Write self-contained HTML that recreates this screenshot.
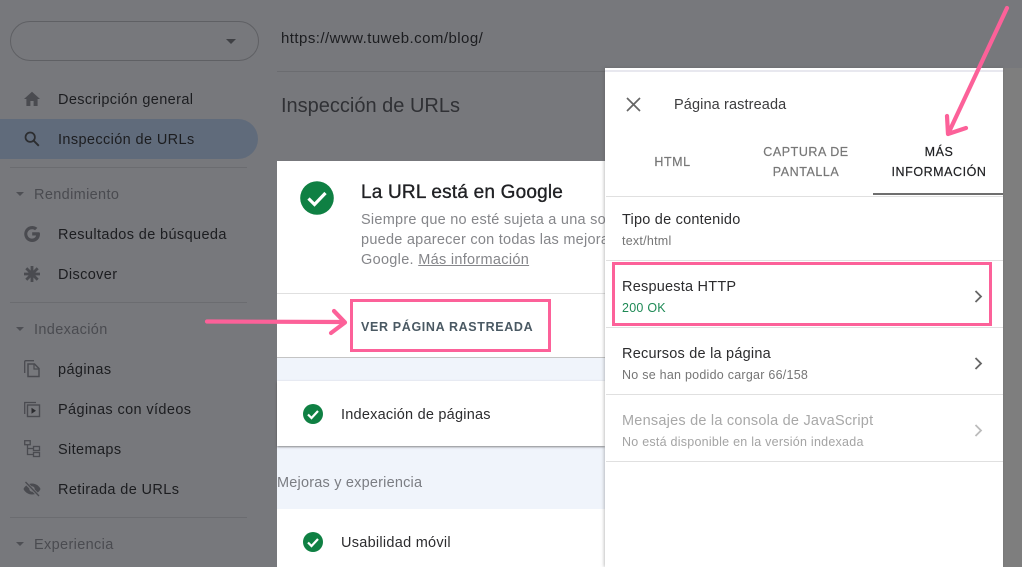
<!DOCTYPE html>
<html lang="es">
<head>
<meta charset="utf-8">
<style>
html,body{margin:0;padding:0;width:1022px;height:567px;overflow:hidden;background:#77787c;}
body{position:relative;font-family:"Liberation Sans",Arial,sans-serif;}
.t{position:absolute;white-space:nowrap;line-height:20px;}
.b{position:absolute;}
.nav{left:58px;font-size:14.5px;color:#1c1d20;letter-spacing:.38px;}
.sec{left:34px;font-size:14.5px;color:#4a4b50;letter-spacing:.35px;}
.tri{position:absolute;left:16px;width:0;height:0;border-left:4px solid transparent;border-right:4px solid transparent;border-top:4px solid #4e4f54;}
.sep{position:absolute;left:10px;width:237px;height:1px;background:#6b6c70;}
svg{position:absolute;overflow:visible;}
.tab{position:absolute;text-align:center;font-size:12.5px;line-height:20px;letter-spacing:.55px;color:#777;-webkit-text-stroke:.2px currentColor;}
.line{position:absolute;left:606px;width:397px;height:1px;background:#e0e0e0;}
.h{left:622px;font-size:14.5px;color:#2c2c2e;letter-spacing:.22px;}
.s{left:622px;font-size:12.5px;color:#757575;letter-spacing:.25px;}
</style>
</head>
<body>
<!-- sidebar -->
<div class="b" style="left:10px;top:21px;width:247px;height:38px;border:1px solid #5f6064;border-radius:20px;"></div>
<div class="b" style="left:226px;top:39px;width:0;height:0;border-left:5px solid transparent;border-right:5px solid transparent;border-top:5px solid #3f4044;"></div>
<div class="b" style="left:0;top:119px;width:258px;height:40px;background:#606b7b;border-radius:0 20px 20px 0;"></div>
<div class="sep" style="top:167px;"></div>
<div class="sep" style="top:302px;"></div>
<div class="sep" style="top:517px;"></div>

<svg style="left:24px;top:91px" width="16" height="16" viewBox="0 0 16 16"><path d="M6.4 15V10h3.2v5h4V8h2.4L8 .8 0 8h2.4v7z" fill="#4a4b50"/></svg>
<svg style="left:24px;top:131px" width="16" height="16" viewBox="0 0 16 16"><circle cx="6.2" cy="6.2" r="4.7" fill="none" stroke="#2c2d30" stroke-width="1.7"/><path d="M9.8 9.8l5 5" stroke="#2c2d30" stroke-width="1.9"/></svg>
<svg style="left:23px;top:225px" width="18" height="18" viewBox="0 0 18 18"><path d="M16.2 7.3H9.2v3.2h3.9c-.5 2-2.100 3.100-4.100 3.100a4.700 4.700 0 1 1 3-8.300l2.400-2.400A8 8 0 1 0 9 17c4.300 0 8-3 8-8 0-.6-.1-1.200-.8-1.700z" fill="#4a4b50"/></svg>
<svg style="left:24px;top:266px" width="16" height="16" viewBox="0 0 16 16"><path d="M8 0v16M0 8h16M2.300 2.300l11.400 11.400M13.700 2.300L2.300 13.700" stroke="#4a4b50" stroke-width="2.800"/></svg>
<svg style="left:24px;top:360px" width="16" height="18" viewBox="0 0 16 18"><path d="M.7 13V1.800Q.7.700 1.800.7H10" fill="none" stroke="#4a4b50" stroke-width="1.300"/><path d="M4 4h6.500L15 8.500V16.500H4z" fill="none" stroke="#4a4b50" stroke-width="1.500"/><path d="M10 4v5h5" fill="none" stroke="#4a4b50" stroke-width="1.200"/></svg>
<svg style="left:24px;top:401px" width="16" height="16" viewBox="0 0 16 16"><path d="M.7 13V1.500H12" fill="none" stroke="#4a4b50" stroke-width="1.300"/><rect x="3.500" y="4" width="12" height="11.500" fill="none" stroke="#4a4b50" stroke-width="1.400"/><path d="M7.500 6.800v6l4.500-3z" fill="#2c2d30"/></svg>
<svg style="left:24px;top:440px" width="16" height="18" viewBox="0 0 16 18"><g fill="none" stroke="#4a4b50" stroke-width="1.300"><rect x=".7" y=".7" width="5.500" height="4"/><rect x="9.500" y="6.500" width="6" height="4"/><rect x="9.500" y="12.500" width="6" height="4"/><path d="M3.500 4.700V14.500H9.500M3.500 8.500H9.500"/></g></svg>
<svg style="left:23px;top:481px" width="18" height="16" viewBox="0 0 18 16"><path d="M9 2.500C5 2.500 1.800 5 .5 8c1.300 3 4.500 5.500 8.500 5.500S16.200 11 17.500 8C16.200 5 13 2.500 9 2.500z" fill="#4a4b50"/><circle cx="9" cy="8" r="2.700" fill="#77787c"/><path d="M2 1l14 14" stroke="#77787c" stroke-width="3.200"/><path d="M2.500 1l13.500 14" stroke="#4a4b50" stroke-width="1.300"/></svg>

<div class="t nav" style="top:90px;">Descripción general</div>
<div class="t nav" style="top:130px;">Inspección de URLs</div>
<div class="tri" style="top:192px;"></div><div class="t sec" style="top:185px;">Rendimiento</div>
<div class="t nav" style="top:225px;">Resultados de búsqueda</div>
<div class="t nav" style="top:265px;">Discover</div>
<div class="tri" style="top:327px;"></div><div class="t sec" style="top:320px;">Indexación</div>
<div class="t nav" style="top:360px;">páginas</div>
<div class="t nav" style="top:400px;">Páginas con vídeos</div>
<div class="t nav" style="top:440px;">Sitemaps</div>
<div class="t nav" style="top:480px;">Retirada de URLs</div>
<div class="tri" style="top:542px;"></div><div class="t sec" style="top:535px;">Experiencia</div>

<!-- top -->
<div class="t" style="left:281px;top:29px;font-size:15px;color:#1c1d20;letter-spacing:.45px;">https://www.tuweb.com/blog/</div>
<div class="b" style="left:277px;top:71px;width:330px;height:1px;background:#6b6c70;"></div>
<div class="t" style="left:281px;top:96px;font-size:20px;color:#303135;">Inspección de URLs</div>

<!-- main -->
<div class="b" style="left:277px;top:358px;width:330px;height:209px;background:#f0f4fb;"></div>
<div class="b" style="left:277px;top:161px;width:330px;height:197px;background:#fff;border-bottom:1px solid #c4c4c4;box-sizing:border-box;"></div>
<div class="b" style="left:277px;top:293px;width:328px;height:1px;background:#e0e0e0;"></div>
<svg style="left:300px;top:181px" width="34" height="34" viewBox="0 0 34 34"><circle cx="17" cy="17" r="16.800" fill="#0f8043"/><path d="M8.500 17.500l6 6 11-11.500" fill="none" stroke="#fff" stroke-width="3.200"/></svg>
<div class="t" style="left:361px;top:183px;font-size:19px;color:#202124;letter-spacing:.2px;-webkit-text-stroke:.35px #202124;">La URL está en Google</div>
<div class="b" style="left:277px;top:205px;width:328px;height:70px;overflow:hidden;">
<div class="t" style="left:84px;top:5px;font-size:14.5px;color:#85868a;letter-spacing:.25px;">Siempre que no esté sujeta a una solicitud</div>
<div class="t" style="left:84px;top:25px;font-size:14.5px;color:#85868a;letter-spacing:.25px;">puede aparecer con todas las mejoras</div>
<div class="t" style="left:84px;top:45px;font-size:14.5px;color:#85868a;letter-spacing:.3px;">Google. <span style="text-decoration:underline;">Más información</span></div>
</div>
<div class="t" style="left:361px;top:317px;font-size:12.500px;font-weight:bold;color:#4a5963;letter-spacing:.65px;">VER PÁGINA RASTREADA</div>
<div class="b" style="left:350px;top:299px;width:201px;height:53px;border:3px solid #fc6199;box-sizing:border-box;"></div>

<div class="b" style="left:277px;top:381px;width:328px;height:65px;background:#fff;box-shadow:0 1px 2px rgba(60,60,60,.6);"></div>
<svg style="left:303px;top:404px" width="20" height="20" viewBox="0 0 20 20"><circle cx="10" cy="10" r="10" fill="#0f8043"/><path d="M5 10.500l3.500 3.500 6.500-7" fill="none" stroke="#fff" stroke-width="2.200"/></svg>
<div class="t" style="left:341px;top:405px;font-size:14.5px;color:#2c2c2e;letter-spacing:.22px;">Indexación de páginas</div>
<div class="t" style="left:277px;top:473px;font-size:14.5px;color:#7b7d83;letter-spacing:.2px;">Mejoras y experiencia</div>
<div class="b" style="left:277px;top:509px;width:328px;height:58px;background:#fff;"></div>
<svg style="left:303px;top:532px" width="20" height="20" viewBox="0 0 20 20"><circle cx="10" cy="10" r="10" fill="#0f8043"/><path d="M5 10.500l3.500 3.500 6.500-7" fill="none" stroke="#fff" stroke-width="2.200"/></svg>
<div class="t" style="left:341px;top:533px;font-size:14.5px;color:#2c2c2e;letter-spacing:.27px;">Usabilidad móvil</div>

<!-- panel -->
<div class="b" style="left:1003px;top:68px;width:19px;height:499px;background:#7e7e7e;"></div>
<div class="b" style="left:605px;top:68px;width:398px;height:499px;background:#fff;box-shadow:-1px 0 3px rgba(80,80,80,.35);"></div>
<div class="b" style="left:605px;top:70px;width:398px;height:2px;background:#e8e8ef;"></div>
<svg style="left:626px;top:97px" width="15" height="15" viewBox="0 0 15 15"><path d="M1 1l13 13M14 1L1 14" stroke="#666" stroke-width="1.700"/></svg>
<div class="t" style="left:674px;top:95px;font-size:14.500px;color:#3c3c3e;letter-spacing:.12px;">Página rastreada</div>
<div class="tab" style="left:606px;top:152px;width:133px;">HTML</div>
<div class="tab" style="left:739px;top:142px;width:134px;">CAPTURA DE<br>PANTALLA</div>
<div class="tab" style="left:873px;top:142px;width:132px;color:#202124;">MÁS<br>INFORMACIÓN</div>
<div class="b" style="left:873px;top:193px;width:130px;height:2px;background:#6e6e6e;"></div>
<div class="line" style="top:196px;"></div>
<div class="t h" style="top:210px;">Tipo de contenido</div>
<div class="t s" style="top:231px;">text/html</div>
<div class="line" style="top:260px;"></div>
<div class="t h" style="top:277px;">Respuesta HTTP</div>
<div class="t s" style="top:298px;color:#1f8a56;">200 OK</div>
<div class="line" style="top:327px;"></div>
<div class="t h" style="top:344px;">Recursos de la página</div>
<div class="t s" style="top:365px;">No se han podido cargar 66/158</div>
<div class="line" style="top:394px;"></div>
<div class="t h" style="top:411px;color:#a8a8a8;">Mensajes de la consola de JavaScript</div>
<div class="t s" style="top:432px;color:#a4a4a4;">No está disponible en la versión indexada</div>
<div class="line" style="top:461px;"></div>
<svg style="left:974px;top:290px" width="9" height="13" viewBox="0 0 9 13"><path d="M1.500 1l5.500 5.500L1.500 12" fill="none" stroke="#666" stroke-width="1.800"/></svg>
<svg style="left:974px;top:357px" width="9" height="13" viewBox="0 0 9 13"><path d="M1.500 1l5.500 5.500L1.500 12" fill="none" stroke="#666" stroke-width="1.800"/></svg>
<svg style="left:974px;top:424px" width="9" height="13" viewBox="0 0 9 13"><path d="M1.500 1l5.500 5.500L1.500 12" fill="none" stroke="#bbb" stroke-width="1.800"/></svg>
<div class="b" style="left:612px;top:262px;width:380px;height:64px;border:3px solid #fc6199;box-sizing:border-box;"></div>

<!-- arrows -->
<svg style="left:0;top:0" width="1022" height="567" viewBox="0 0 1022 567">
<g fill="none" stroke="#fc6199" stroke-linecap="round" stroke-linejoin="round">
<path d="M207 321.500L343 322" stroke-width="4.200"/>
<path d="M334 311L345 322.500L331 333" stroke-width="4.200"/>
<path d="M1007 8L949 132" stroke-width="4.200"/>
<path d="M947 116L948 134L966 128" stroke-width="4.200"/>
</g>
</svg>
</body>
</html>
